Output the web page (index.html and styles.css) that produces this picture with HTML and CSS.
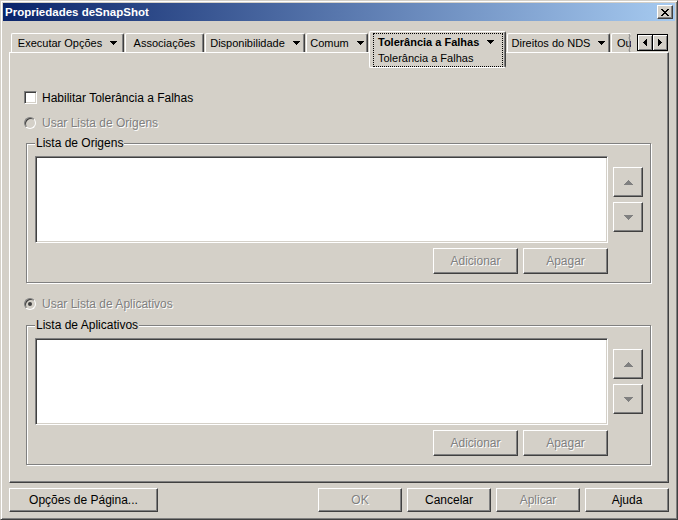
FILE: index.html
```html
<!DOCTYPE html>
<html lang="pt">
<head>
<meta charset="utf-8">
<title>Propriedades deSnapShot</title>
<link rel="stylesheet" href="styles.css">
</head>
<body>
<div class="window">
  <div class="titlebar">
    <span class="title">Propriedades deSnapShot</span>
    <div class="close"><svg width="8" height="7" viewBox="0 0 8 7" shape-rendering="crispEdges"><path d="M0 0h2v1H0zM6 0h2v1H6zM1 1h2v1H1zM5 1h2v1H5zM2 2h4v1H2zM3 3h2v1H3zM2 4h4v1H2zM1 5h2v1H1zM5 5h2v1H5zM0 6h2v1H0zM6 6h2v1H6z"/></svg></div>
  </div>
  <div class="client">
    <div class="tabrow">
      <div class="tab w1"><span>Executar Opções</span><svg class="dd" width="7" height="4" viewBox="0 0 7 4" shape-rendering="crispEdges"><path d="M0 0h7v1H0zM1 1h5v1H1zM2 2h3v1H2zM3 3h1v1H3z"/></svg></div>
      <div class="tab w2"><span>Associações</span></div>
      <div class="tab w3"><span>Disponibilidade</span><svg class="dd" width="7" height="4" viewBox="0 0 7 4" shape-rendering="crispEdges"><path d="M0 0h7v1H0zM1 1h5v1H1zM2 2h3v1H2zM3 3h1v1H3z"/></svg></div>
      <div class="tab w4"><span>Comum</span><svg class="dd" width="7" height="4" viewBox="0 0 7 4" shape-rendering="crispEdges"><path d="M0 0h7v1H0zM1 1h5v1H1zM2 2h3v1H2zM3 3h1v1H3z"/></svg></div>
      <div class="tab sel">
        <div class="focus">
          <div class="selline"><b>Tolerância a Falhas</b><svg class="dd" width="7" height="4" viewBox="0 0 7 4" shape-rendering="crispEdges"><path d="M0 0h7v1H0zM1 1h5v1H1zM2 2h3v1H2zM3 3h1v1H3z"/></svg></div>
          <div class="subline">Tolerância a Falhas</div>
        </div>
      </div>
      <div class="tab w6"><span>Direitos do NDS</span><svg class="dd" width="7" height="4" viewBox="0 0 7 4" shape-rendering="crispEdges"><path d="M0 0h7v1H0zM1 1h5v1H1zM2 2h3v1H2zM3 3h1v1H3z"/></svg></div>
      <div class="tab cut"><span>Ou</span><svg class="zig" width="3" height="18" viewBox="0 0 3 18"><polyline points="1,0 2,2 1,4 2,6 1,8 2,10 1,12 2,14 1,16 2,18" fill="none" stroke="#808080" stroke-width="1"/></svg></div>
      <div class="scroller">
        <div class="sbtn"><svg width="4" height="7" viewBox="0 0 4 7" shape-rendering="crispEdges"><path d="M3 0h1v7H3zM2 1h1v5H2zM1 2h1v3H1zM0 3h1v1H0z"/></svg></div>
        <div class="sbtn"><svg width="4" height="7" viewBox="0 0 4 7" shape-rendering="crispEdges"><path d="M0 0h1v7H0zM1 1h1v5H1zM2 2h1v3H2zM3 3h1v1H3z"/></svg></div>
      </div>
    </div>
    <div class="panel">
      <div class="row row-check">
        <span class="checkbox"></span>
        <span class="label">Habilitar Tolerância a Falhas</span>
      </div>
      <div class="row row-radio1">
        <span class="radio"></span>
        <span class="label dis">Usar Lista de Origens</span>
      </div>
      <div class="group group1">
        <span class="legend">Lista de Origens</span>
        <div class="listbox"></div>
        <div class="arrows">
          <div class="abtn"><svg width="9" height="5" viewBox="0 0 9 5" shape-rendering="crispEdges"><path d="M4 0h1v1H4zM3 1h3v1H3zM2 2h5v1H2zM1 3h7v1H1zM0 4h9v1H0z" fill="#808080"/></svg></div>
          <div class="abtn"><svg width="9" height="5" viewBox="0 0 9 5" shape-rendering="crispEdges"><path d="M0 0h9v1H0zM1 1h7v1H1zM2 2h5v1H2zM3 3h3v1H3zM4 4h1v1H4z" fill="#808080"/></svg></div>
        </div>
        <div class="actions">
          <div class="btn small dis">Adicionar</div>
          <div class="btn small dis">Apagar</div>
        </div>
      </div>
      <div class="row row-radio2">
        <span class="radio checked"></span>
        <span class="label dis">Usar Lista de Aplicativos</span>
      </div>
      <div class="group group2">
        <span class="legend">Lista de Aplicativos</span>
        <div class="listbox"></div>
        <div class="arrows">
          <div class="abtn"><svg width="9" height="5" viewBox="0 0 9 5" shape-rendering="crispEdges"><path d="M4 0h1v1H4zM3 1h3v1H3zM2 2h5v1H2zM1 3h7v1H1zM0 4h9v1H0z" fill="#808080"/></svg></div>
          <div class="abtn"><svg width="9" height="5" viewBox="0 0 9 5" shape-rendering="crispEdges"><path d="M0 0h9v1H0zM1 1h7v1H1zM2 2h5v1H2zM3 3h3v1H3zM4 4h1v1H4z" fill="#808080"/></svg></div>
        </div>
        <div class="actions">
          <div class="btn small dis">Adicionar</div>
          <div class="btn small dis">Apagar</div>
        </div>
      </div>
    </div>
    <div class="footer">
      <div class="btn wide">Opções de Pá<u>g</u>ina...</div>
      <div class="btn std push dis">OK</div>
      <div class="btn std">Cancelar</div>
      <div class="btn std dis">Aplicar</div>
      <div class="btn std">Ajuda</div>
    </div>
  </div>
</div>
</body>
</html>
```

FILE: styles.css
```css
html, body {
  margin: 0;
  padding: 0;
  background: #d4d0c8;
}

.window {
  width: 678px;
  height: 520px;
  box-sizing: border-box;
  border: 1px solid;
  border-color: #d4d0c8 #404040 #404040 #d4d0c8;
  box-shadow: inset 1px 1px 0 #fff, inset -1px -1px 0 #808080;
  padding: 2px;
  background: #d4d0c8;
  display: flex;
  flex-direction: column;
  font-family: "Liberation Sans", Arial, sans-serif;
  font-size: 12px;
  color: #000;
}

/* title bar */
.titlebar {
  height: 18px;
  flex: none;
  background: linear-gradient(to right, #0a246a, #a6caf0);
  display: flex;
  align-items: center;
  justify-content: space-between;
  padding: 0 2px 0 2px;
}

.title {
  color: #fff;
  font-weight: bold;
  font-size: 11.5px;
  white-space: nowrap;
}

.close {
  width: 16px;
  height: 14px;
  box-sizing: border-box;
  background: #d4d0c8;
  border: 1px solid;
  border-color: #fff #404040 #404040 #fff;
  box-shadow: inset -1px -1px 0 #808080;
  display: flex;
  align-items: center;
  justify-content: center;
}

.close svg { display: block; }

/* client area */
.client {
  flex: 1;
  display: flex;
  flex-direction: column;
  padding: 10px 6px 5px 6px;
}

/* tabs */
.tabrow {
  height: 21px;
  flex: none;
  display: flex;
  align-items: flex-start;
  padding-left: 2px;
  font-size: 11px;
}

.tab {
  height: 19px;
  margin-top: 2px;
  margin-right: 1px;
  box-sizing: border-box;
  border: 1px solid;
  border-color: #fff #404040 transparent #fff;
  border-bottom: none;
  border-radius: 2px 2px 0 0;
  box-shadow: inset -1px 0 0 #808080;
  display: flex;
  align-items: center;
  justify-content: center;
  gap: 8px;
  white-space: nowrap;
  flex: none;
}

.tab .dd { display: block; flex: none; }

.w1 { width: 113px; }
.w2 { width: 79px; }
.w3 { width: 100px; }
.w4 { width: 62px; }
.w6 { width: 103px; }

.tab.cut {
  width: 20px;
  border-right: none;
  box-shadow: none;
  justify-content: flex-start;
  padding-left: 5px;
  gap: 0;
  overflow: hidden;
  position: relative;
}

.tab.cut .zig {
  position: absolute;
  right: 0;
  top: 0;
}

.tab.sel {
  width: 137px;
  height: 37px;
  margin-top: 0;
  border-bottom: 1px solid #fff;
  border-radius: 2px;
  padding: 1px 2px 0 3px;
  display: block;
  background: #d4d0c8;
  position: relative;
  z-index: 1;
}

.focus {
  height: 34px;
  box-sizing: border-box;
  border: 1px dotted #000;
  padding: 0 4px;
}

.selline {
  height: 16px;
  display: flex;
  align-items: center;
  gap: 8px;
}

.selline b { font-weight: bold; }

.subline {
  height: 16px;
  line-height: 16px;
}

.scroller {
  margin-left: auto;
  margin-right: 1px;
  margin-top: 3px;
  display: flex;
  border: 1px solid #000;
  background: #000;
  gap: 1px;
}

.sbtn {
  width: 14px;
  height: 15px;
  box-sizing: border-box;
  background: #d4d0c8;
  box-shadow: inset 1px 1px 0 #fff, inset -1px -1px 0 #808080;
  display: flex;
  align-items: center;
  justify-content: center;
}

.sbtn svg { display: block; }

/* panel */
.panel {
  height: 431px;
  flex: none;
  box-sizing: border-box;
  border: 1px solid;
  border-color: #fff #404040 #404040 #fff;
  box-shadow: inset -1px -1px 0 #808080;
  padding-top: 36px;
}

.row {
  height: 17px;
  display: flex;
  align-items: center;
  padding-left: 14px;
}

.row-radio1 { margin-top: 8px; }
.row-radio2 { margin-top: 12px; }

.checkbox {
  width: 13px;
  height: 13px;
  box-sizing: border-box;
  background: #fff;
  border: 1px solid;
  border-color: #808080 #fff #fff #808080;
  box-shadow: inset 1px 1px 0 #404040, inset -1px -1px 0 #d4d0c8;
  margin-right: 5px;
  flex: none;
}

.radio {
  width: 12px;
  height: 12px;
  box-sizing: border-box;
  border-radius: 50%;
  background: #d4d0c8;
  border: 1px solid;
  border-color: #808080 #fff #fff #808080;
  box-shadow: inset 1px 1px 0 #404040;
  margin-right: 6px;
  flex: none;
  display: flex;
  align-items: center;
  justify-content: center;
}

.radio.checked::after {
  content: "";
  width: 4px;
  height: 4px;
  border-radius: 50%;
  background: #404040;
}

.label { white-space: nowrap; }

.dis {
  color: #808080;
  text-shadow: 1px 1px 0 #fff;
}

/* group boxes */
.group {
  position: relative;
  margin: 12px 17px 0 16px;
  height: 140px;
  box-sizing: border-box;
  border: 1px solid #808080;
  box-shadow: inset 1px 1px 0 #fff, 1px 1px 0 #fff;
  padding: 12px 7px 8px 8px;
  display: grid;
  grid-template-columns: 573px 30px;
  grid-template-rows: 87px 26px;
  column-gap: 5px;
  row-gap: 5px;
}

.group2 { margin-top: 13px; }

.legend {
  position: absolute;
  top: -8px;
  left: 8px;
  padding: 0 1px;
  line-height: 14px;
  background: #d4d0c8;
  white-space: nowrap;
}

.listbox {
  box-sizing: border-box;
  background: #fff;
  border: 1px solid;
  border-color: #808080 #fff #fff #808080;
  box-shadow: inset 1px 1px 0 #404040, inset -1px -1px 0 #d4d0c8;
}

.arrows {
  grid-column: 2;
  grid-row: 1;
  padding-top: 11px;
  display: flex;
  flex-direction: column;
  gap: 5px;
}

.abtn {
  width: 30px;
  height: 30px;
  box-sizing: border-box;
  border: 1px solid;
  border-color: #fff #404040 #404040 #fff;
  box-shadow: inset -1px -1px 0 #808080;
  display: flex;
  align-items: center;
  justify-content: center;
}

.abtn svg { display: block; }

.actions {
  grid-column: 1;
  grid-row: 2;
  display: flex;
  justify-content: flex-end;
  gap: 5px;
}

/* buttons */
.btn {
  box-sizing: border-box;
  border: 1px solid;
  border-color: #fff #404040 #404040 #fff;
  box-shadow: inset -1px -1px 0 #808080;
  display: flex;
  align-items: center;
  justify-content: center;
  white-space: nowrap;
}

.btn.small {
  width: 85px;
  height: 26px;
}

.footer {
  margin-top: 5px;
  height: 24px;
  flex: none;
  display: flex;
  gap: 5px;
}

.btn.wide { width: 149px; }
.btn.std { width: 84px; }
.push { margin-left: auto; }
```
